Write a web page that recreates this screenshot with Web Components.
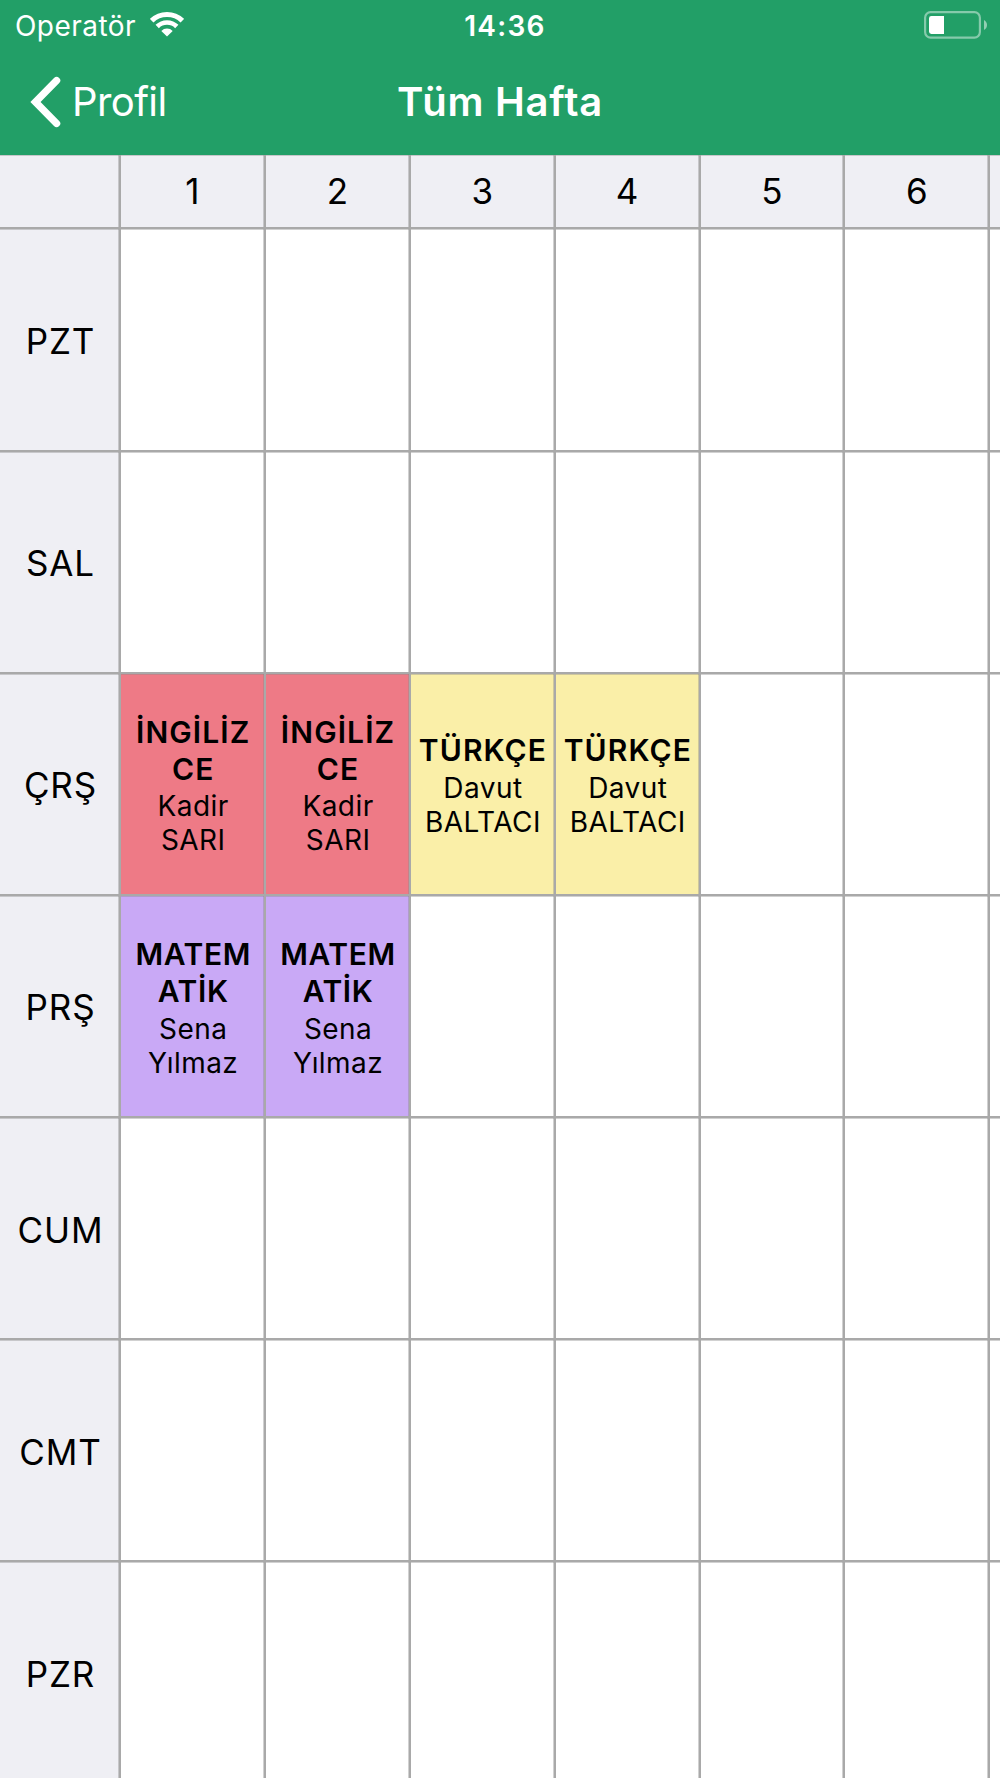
<!DOCTYPE html>
<html lang="tr">
<head>
<meta charset="utf-8">
<title>Tüm Hafta</title>
<style>
  html, body { margin: 0; height: 100%; overflow: hidden; }
  body {
    font-family: Inter, "Liberation Sans", sans-serif;
    background: #fff;
    color: #000;
    --green: #229f67;
    --head: #efeff4;
    --line: #a9a9a9;
    --line-soft: rgba(140, 140, 140, .4);
  }
</style>
</head>
<body>
<week-app></week-app>
<script>
const define = (name, html, setup) => {
  const template = document.createElement('template');
  template.innerHTML = html;
  customElements.define(name, class extends HTMLElement {
    constructor() {
      super();
      this.attachShadow({ mode: 'open' }).append(template.content.cloneNode(true));
    }
    connectedCallback() { if (setup) setup(this, this.shadowRoot); }
  });
};

define('wifi-icon', `
  <style>:host { display: block; width: 34px; height: 25px; } svg { display: block; }</style>
  <svg width="34" height="25" viewBox="0 0 34 25" fill="none" stroke="#fff">
    <path d="M1.700 8.700A22 22 0 0 1 32.300 8.700" stroke-width="5"/>
    <path d="M7.200 14.500A14 14 0 0 1 26.800 14.500" stroke-width="4.700"/>
    <path d="M17 24.600L11.300 18.900A8.200 8.200 0 0 1 22.700 18.900Z" fill="#fff" stroke="none"/>
  </svg>`);

define('battery-icon', `
  <style>:host { display: block; width: 64px; height: 28px; } svg { display: block; }</style>
  <svg width="64" height="28" viewBox="0 0 64 28">
    <rect x="1.100" y="1.200" width="54.800" height="25.400" rx="5.500" fill="none" stroke="#fff" stroke-opacity=".45" stroke-width="2.200"/>
    <path d="M20 5V23H7.400A2.400 2.400 0 0 1 5 20.600V7.400A2.400 2.400 0 0 1 7.400 5Z" fill="#fff"/>
    <path d="M60 9C64 11 64 17 60 19Z" fill="#fff" fill-opacity=".5"/>
  </svg>`);

define('status-bar', `
  <style>
    :host { display: grid; grid-template-columns: 1fr auto 1fr; align-items: center; height: 50px; padding: 0 11px 0 15px; box-sizing: border-box; font-size: 28px; line-height: 34px; }
    .carrier { display: flex; align-items: center; gap: 14.5px; letter-spacing: .45px; padding-top: 1px; }
    wifi-icon { margin-top: -3px; }
    time { font-weight: 580; letter-spacing: 1.290px; padding: 1px 0 0 6px; }
    battery-icon { justify-self: end; margin: -1px 1px 0 0; }
  </style>
  <div class="carrier"><span>Operatör</span><wifi-icon></wifi-icon></div>
  <time>14:36</time>
  <battery-icon></battery-icon>`);

define('back-button', `
  <style>
    :host { display: flex; align-items: center; gap: 11px; letter-spacing: -.6px; }
    svg { display: block; }
  </style>
  <svg width="31" height="52" viewBox="0 0 31 52" fill="none" stroke="#fff" stroke-width="7.300" stroke-linecap="round">
    <path d="M26.600 4.500L5.500 26L26.600 47.500"/>
  </svg>
  <span><slot></slot></span>`);

define('nav-bar', `
  <style>
    :host { display: grid; grid-template-columns: 1fr auto 1fr; align-items: center; height: 105px; padding: 0 30px 2px; box-sizing: border-box; font-size: 40px; line-height: 48px; }
    h1 { margin: 0; font: inherit; font-weight: 575; letter-spacing: .75px; }
  </style>
  <slot name="back"></slot>
  <h1><slot></slot></h1>`);

define('head-cell', `
  <style>
    :host { display: flex; align-items: center; justify-content: center; box-sizing: border-box; background: var(--head); font-size: 35px; line-height: 42px; letter-spacing: .9px; padding: 3px 0 0 2px;
      border-right: 2px solid var(--line); border-bottom: 2px solid var(--line);
      box-shadow: inset -1px 0 0 var(--line-soft), inset 0 1px 0 var(--line-soft); }
    :host([column]) { padding: 0 0 0 1px; }
  </style>
  <slot></slot>`);

define('lesson-cell', `
  <style>
    :host { display: flex; flex-direction: column; align-items: stretch; justify-content: center; box-sizing: border-box; text-align: center; background: var(--fill, #fff); padding: 3.5px 4.500px 0 6px; min-width: 0; overflow-wrap: anywhere;
      border-right: 2px solid var(--line); border-bottom: 2px solid var(--line);
      box-shadow: inset -1px 0 0 var(--line-soft), inset 0 1px 0 var(--line-soft); }
    b { font-size: 30px; line-height: 37.330px; font-weight: 600; letter-spacing: 1.100px; }
    span { font-size: 28px; line-height: 34px; letter-spacing: .45px; margin-top: 1px; }
    b:empty, span:empty { display: none; }
    :host([subject="MATEMATİK"]) b { letter-spacing: .6px; }
  </style>
  <b></b><span></span>`, (host, root) => {
    root.querySelector('b').textContent = host.getAttribute('subject') || '';
    root.querySelector('span').textContent = host.getAttribute('teacher') || '';
    const fill = host.getAttribute('fill');
    if (fill) host.style.setProperty('--fill', fill);
  });

define('week-grid', `
  <style>
    :host { display: grid; grid-template-columns: 121px repeat(7, 144.890px); grid-template-rows: 74.330px repeat(7, 222.180px); width: 1136px; }
  </style>`, (host, root) => {
    const lessons = {
      'ÇRŞ': [
        ['İNGİLİZCE', 'Kadir SARI', '#ee7a86'], ['İNGİLİZCE', 'Kadir SARI', '#ee7a86'],
        ['TÜRKÇE', 'Davut BALTACI', '#faefa8'], ['TÜRKÇE', 'Davut BALTACI', '#faefa8']],
      'PRŞ': [
        ['MATEMATİK', 'Sena Yılmaz', '#c9a9f6'], ['MATEMATİK', 'Sena Yılmaz', '#c9a9f6']]
    };
    const head = (text, column) => {
      const cell = document.createElement('head-cell');
      cell.textContent = text;
      cell.toggleAttribute('column', column);
      root.append(cell);
    };
    ['', '1', '2', '3', '4', '5', '6', ''].forEach(text => head(text, true));
    for (const day of ['PZT', 'SAL', 'ÇRŞ', 'PRŞ', 'CUM', 'CMT', 'PZR']) {
      head(day, false);
      for (let i = 0; i < 7; i++) {
        const cell = document.createElement('lesson-cell');
        const lesson = (lessons[day] || [])[i];
        if (lesson) ['subject', 'teacher', 'fill'].forEach((key, n) => cell.setAttribute(key, lesson[n]));
        root.append(cell);
      }
    }
  });

define('week-app', `
  <style>
    :host { display: flex; flex-direction: column; height: 1778px; overflow: hidden; }
    header { background: var(--green); color: #fff; flex: none; }
    main { flex: 1; min-height: 0; overflow: hidden; }
  </style>
  <header>
    <status-bar></status-bar>
    <nav-bar><back-button slot="back">Profil</back-button>Tüm Hafta</nav-bar>
  </header>
  <main><week-grid></week-grid></main>`);
</script>
</body>
</html>
